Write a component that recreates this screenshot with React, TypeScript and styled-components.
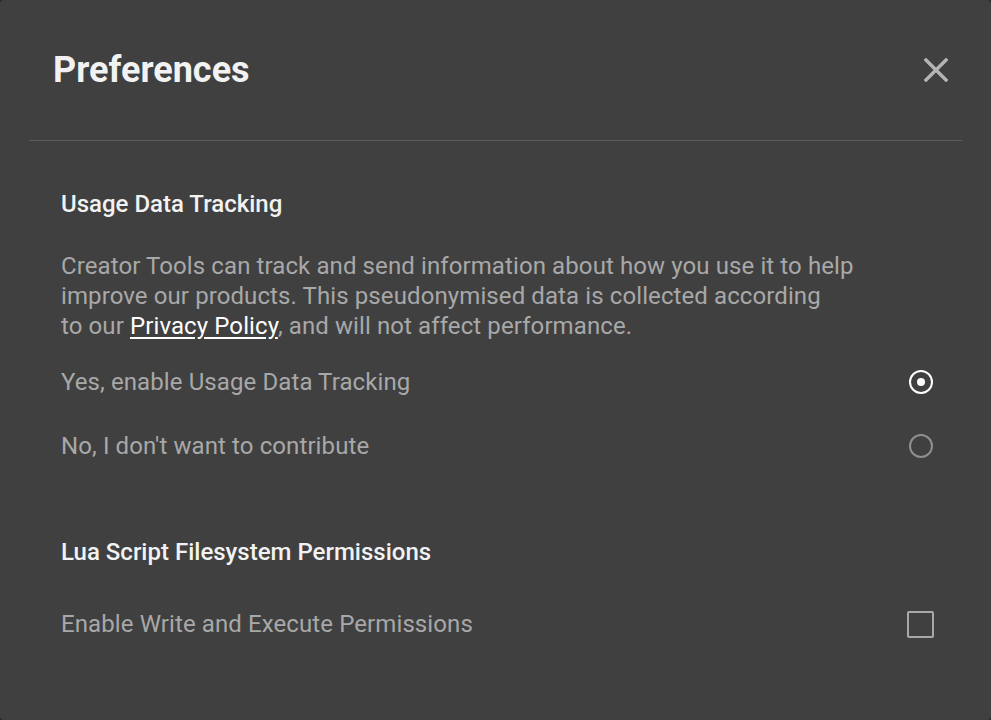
import React, { useState } from 'react';
import styled, { createGlobalStyle, css } from 'styled-components';

const Colors = {
  Page: '#262626',
  Dialog: '#404040',
  Divider: '#5c5c5c',
  Heading: '#f2f2f2',
  Body: '#a8a8a8',
  Muted: '#8f8f8f',
};

const GlobalStyle = createGlobalStyle`
  html, body {
    margin: 0;
    padding: 0;
    background: ${Colors.Page};
  }
  * {
    box-sizing: border-box;
  }
`;

const Dialog = styled.div`
  width: 991px;
  height: 720px;
  background: ${Colors.Dialog};
  border-radius: 4px;
  font-family: Roboto, 'Liberation Sans', sans-serif;
  display: flex;
  flex-direction: column;
`;

const Header = styled.div`
  height: 140px;
  display: flex;
  align-items: center;
  justify-content: space-between;
  padding: 0 43px 0 53px;
`;

const Title = styled.h1`
  margin: 0;
  font-size: 36px;
  font-weight: 700;
  color: ${Colors.Heading};
`;

const CloseButton = styled.button`
  width: 24px;
  height: 24px;
  padding: 0;
  border: none;
  background: none;
  cursor: pointer;
  display: flex;
  align-items: center;
  justify-content: center;
`;

const Divider = styled.hr`
  margin: 0 29px;
  border: none;
  height: 1px;
  background: ${Colors.Divider};
`;

const Content = styled.div`
  padding: 0 57px 0 61px;
  display: flex;
  flex-direction: column;
`;

const Section = styled.section<{ first?: boolean }>`
  margin-top: ${(props) => (props.first ? '48px' : '59px')};
  display: flex;
  flex-direction: column;
`;

const SectionTitle = styled.h2`
  margin: 0;
  font-size: 24px;
  line-height: 30px;
  font-weight: 500;
  color: ${Colors.Heading};
`;

const Description = styled.p`
  margin: 32px 0 0;
  font-size: 24px;
  line-height: 30px;
  letter-spacing: 0.1px;
  color: ${Colors.Body};
  white-space: nowrap;
`;

const Link = styled.a`
  color: #ffffff;
  text-decoration: underline;
  text-underline-offset: 3px;
`;

const OptionList = styled.div<{ gap: number }>`
  margin-top: ${(props) => props.gap}px;
  display: flex;
  flex-direction: column;
`;

const OptionRow = styled.label`
  height: 64px;
  display: flex;
  align-items: center;
  justify-content: space-between;
  font-size: 24px;
  letter-spacing: 0.1px;
  color: ${Colors.Body};
  cursor: pointer;
`;

const Radio = styled.span<{ checked: boolean }>`
  width: 24px;
  height: 24px;
  margin-right: 1px;
  border-radius: 50%;
  border: 2px solid ${Colors.Muted};
  display: flex;
  align-items: center;
  justify-content: center;

  ${(props) =>
    props.checked &&
    css`
      border-color: #ffffff;
      &::after {
        content: '';
        width: 8px;
        height: 8px;
        border-radius: 50%;
        background: #ffffff;
      }
    `}
`;

const Checkbox = styled.span<{ checked: boolean }>`
  width: 27px;
  height: 27px;
  border-radius: 2px;
  border: 2px solid ${Colors.Body};
  background: ${(props) => (props.checked ? Colors.Body : 'transparent')};
`;

function App() {
  const [tracking, setTracking] = useState<'yes' | 'no'>('yes');
  const [writeAccess, setWriteAccess] = useState(false);

  return (
    <>
      <GlobalStyle />
      <Dialog>
        <Header>
          <Title>Preferences</Title>
          <CloseButton aria-label="Close">
            <svg width="24" height="24" viewBox="0 0 24 24">
              <path
                d="M2 2 L22 22 M22 2 L2 22"
                stroke="#b4b4b4"
                strokeWidth="3.4"
                strokeLinecap="square"
              />
            </svg>
          </CloseButton>
        </Header>
        <Divider />
        <Content>
          <Section first>
            <SectionTitle>Usage Data Tracking</SectionTitle>
            <Description>
              Creator Tools can track and send information about how you use it to help
              <br />
              improve our products. This pseudonymised data is collected according
              <br />
              to our <Link href="#">Privacy Policy</Link>, and will not affect performance.
            </Description>
            <OptionList gap={9}>
              <OptionRow onClick={() => setTracking('yes')}>
                Yes, enable Usage Data Tracking
                <Radio checked={tracking === 'yes'} />
              </OptionRow>
              <OptionRow onClick={() => setTracking('no')}>
                No, I don't want to contribute
                <Radio checked={tracking === 'no'} />
              </OptionRow>
            </OptionList>
          </Section>
          <Section>
            <SectionTitle>Lua Script Filesystem Permissions</SectionTitle>
            <OptionList gap={25}>
              <OptionRow onClick={() => setWriteAccess(!writeAccess)}>
                Enable Write and Execute Permissions
                <Checkbox checked={writeAccess} />
              </OptionRow>
            </OptionList>
          </Section>
        </Content>
      </Dialog>
    </>
  );
}

export default App;
